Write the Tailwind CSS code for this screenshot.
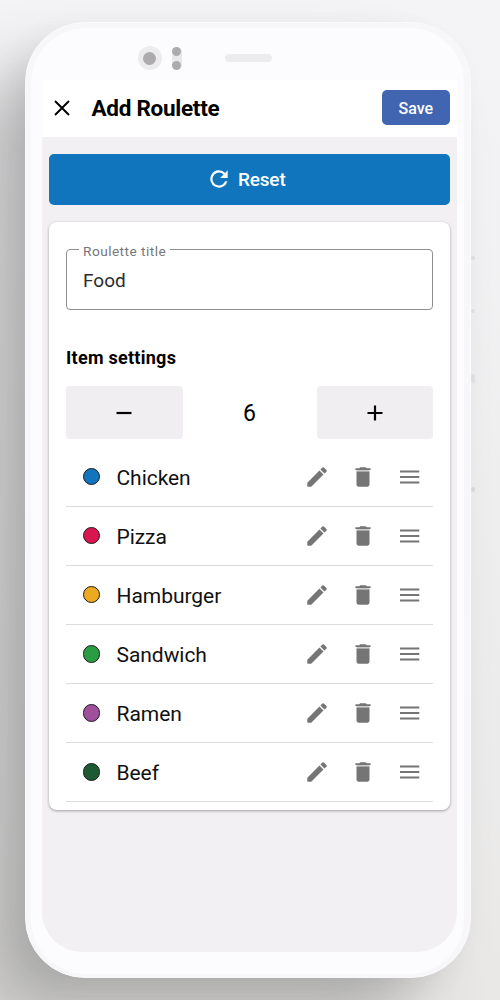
<!DOCTYPE html>
<html lang="en">
<head>
<meta charset="utf-8">
<title>Add Roulette</title>
<script src="https://cdn.jsdelivr.net/npm/@tailwindcss/browser@4"></script>
</head>
<body class="w-[500px] h-[1000px] overflow-hidden bg-linear-to-b from-[#f4f3f5] via-[#efeeef] to-[#e9e8e7] font-['Roboto',sans-serif] text-black">
<svg class="hidden">
  <symbol id="pencil" viewBox="0 0 24 24"><path d="M3.300 17.100Q3 17.400 3 17.800V20.400Q3 21 3.600 21H6.200Q6.600 21 6.900 20.700L18 9.750 14.250 6 3.300 17.100zM20.710 7.040a1 1 0 0 0 0-1.410l-2.340-2.340a1 1 0 0 0-1.410 0l-1.830 1.830 3.750 3.750 1.830-1.830z"/></symbol>
  <symbol id="trash" viewBox="0 0 24 24"><path d="M6 19c0 1.100.9 2 2 2h8c1.100 0 2-.9 2-2V7H6v12zM19 4h-3.500l-1-1h-5l-1 1H5v1.600h14V4z"/><path d="M6 5.600h12V7H6z" opacity=".4"/></symbol>
  <symbol id="lines" viewBox="0 0 20 14"><path d="M0 .6h19.300v2H0zM0 6h19.300v2H0zM0 11.400h19.300v2H0z"/></symbol>
</svg>
<div class="relative w-[500px] h-[1000px] pt-[22px] pl-[25px]">
  <div class="absolute left-[471px] top-[256px] w-[4px] h-[4px] rounded bg-[#e2e1e1]"></div>
  <div class="absolute left-[471px] top-[309px] w-[4px] h-[4px] rounded bg-[#e4e3e3]"></div>
  <div class="absolute left-[471px] top-[374px] w-[4px] h-[9px] rounded bg-[#e4e3e3]"></div>
  <div class="absolute left-[471px] top-[487px] w-[4px] h-[5px] rounded bg-[#dddcdb]"></div>
  <main class="relative w-[446px] h-[955.500px] rounded-[60px] bg-[#f7f6f9] border border-[#faf9fb] p-[5px] pr-[6px] pb-[3px] shadow-[-55px_50px_70px_0px_rgba(60,58,58,0.30),-12px_10px_30px_-6px_rgba(60,58,58,0.10)]">
    <div class="h-full rounded-[55px] bg-[#fcfbfe] pl-[11px] pr-[8px] flex flex-col">
      <div class="h-[52px] shrink-0 flex items-start pl-[95.500px] pt-[18px]">
        <div class="size-6 rounded-full bg-[#ecebed] flex items-center justify-center"><div class="size-[13px] rounded-full bg-[#adabad]"></div></div>
        <div class="ml-[10px] mt-[1px] w-[10px] h-[23px] rounded-[5px] bg-[#e9e8ea] flex flex-col justify-between items-center"><div class="size-[9px] rounded-full bg-[#adabad]"></div><div class="size-[9px] rounded-full bg-[#adabad]"></div></div>
        <div class="ml-[43px] mt-[8px] w-[47px] h-[7.500px] rounded-full bg-[#ecebed]"></div>
      </div>
      <div class="h-[872px] shrink-0 rounded-b-[40px] overflow-hidden bg-[#f2f0f3] w-[414.500px]">
        <header class="h-[57px] bg-white flex items-center pl-[12px] pr-[7px] pb-[2px]">
          <svg class="w-4 h-4 shrink-0" viewBox="0 0 16 16" fill="none" stroke="#000" stroke-width="1.900"><path d="M1 1l14 14M15 1L1 15"/></svg>
          <h1 class="ml-[21.500px] mt-[1.500px] text-[22.500px] leading-7 font-bold whitespace-nowrap tracking-[-0.28px]">Add Roulette</h1>
          <button class="ml-auto w-[67.500px] h-[35px] rounded-[5px] bg-[#4265b1] text-white text-[16px] pt-[2px] font-medium">Save</button>
        </header>
        <div class="pt-[17px] px-[7px]">
          <button class="w-[400.500px] h-[50.500px] rounded-[5px] bg-[#1075bc] text-white flex items-center justify-center gap-[6px] pr-[7px] text-[19px] font-medium">
            <svg class="size-[26px]" viewBox="0 0 24 24" fill="currentColor"><path d="M17.650 6.350A8 8 0 1 0 19.730 14h-2.080A6 6 0 1 1 12 6c1.660 0 3.140.69 4.220 1.780L13 11h7V4l-2.350 2.350z"/></svg>
            <span class="mt-[2px] tracking-[-0.15px]">Reset</span>
          </button>
          <section class="mt-[17px] w-[400.500px] h-[588.500px] rounded-[8px] bg-white px-[17px] pt-[18px] shadow-[0_1px_3px_rgba(0,0,0,0.35)]">
            <fieldset class="h-[70px] w-[367px] rounded-[4px] border border-[#8f8f8f] pl-[12px]">
              <legend class="px-[4px] h-[19px] leading-[22px] text-[13.700px] tracking-[0.45px] text-[#777]">Roulette title</legend>
              <div class="mt-[10px] pl-[4px] text-[19px] leading-6 text-[#2b2b2b]">Food</div>
            </fieldset>
            <h2 class="mt-[36px] text-[18px] leading-6 font-bold tracking-[0.27px]">Item settings</h2>
            <div class="mt-[16.500px] -mb-px flex justify-between items-center w-[367px] h-[52.500px]">
              <div class="w-[116.500px] h-full rounded-[4px] bg-[#f0eef1] flex items-center justify-center pt-px"><svg class="size-4" viewBox="0 0 16 16"><path d="M.5 8h15" stroke="#000" stroke-width="2.200"/></svg></div>
              <span class="text-[23px] mt-[4px]">6</span>
              <div class="w-[116.500px] h-full rounded-[4px] bg-[#f0eef1] flex items-center justify-center pt-px"><svg class="size-4" viewBox="0 0 16 16"><path d="M.5 8h15M8 .5v15" stroke="#000" stroke-width="2.200"/></svg></div>
            </div>
            <ul id="items" class="mt-[10px] w-[367px]"></ul>
          </section>
        </div>
      </div>
    </div>
  </main>
</div>
<script>
const items = [['Chicken','#1075bc'],['Pizza','#d91650'],['Hamburger','#ecaa20'],['Sandwich','#2a9c41'],['Ramen','#a0509b'],['Beef','#1b5a33']];
document.getElementById('items').innerHTML = items.map(([name, color]) => `
  <li class="h-[59.100px] border-b border-[#dcdcdc] flex items-center pl-[16.500px] pr-[13.200px]">
    <span class="size-[17.500px] rounded-full border-[1.500px] border-[#1c1c1c]" style="background:${color}"></span>
    <span class="ml-[16.500px] mt-[2px] text-[21px] leading-6 tracking-[-0.05px] text-[#111]">${name}</span>
    <svg class="ml-auto size-[26px] fill-[#757575]"><use href="#pencil"/></svg>
    <svg class="ml-[20.500px] size-[26px] fill-[#757575]"><use href="#trash"/></svg>
    <svg class="ml-[23.500px] w-5 h-[14px] fill-[#757575]"><use href="#lines"/></svg>
  </li>`).join('');
</script>
</body>
</html>
